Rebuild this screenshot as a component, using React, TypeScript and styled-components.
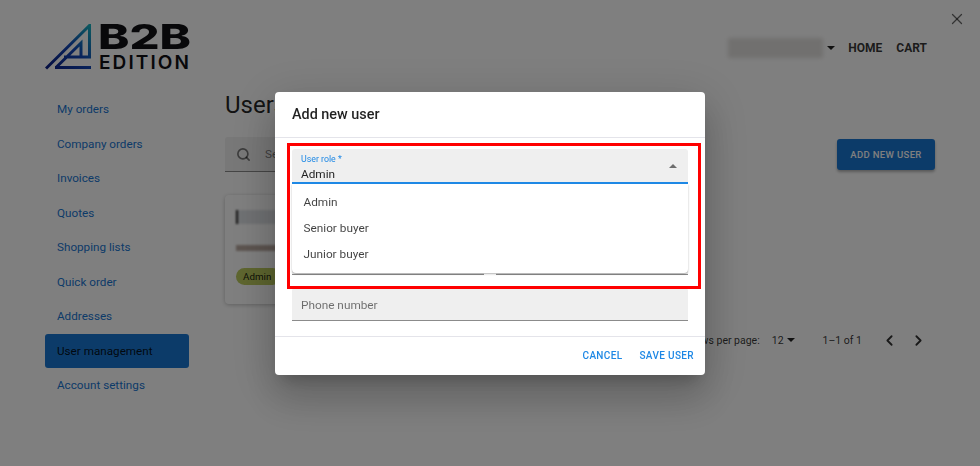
import styled, { createGlobalStyle } from 'styled-components';
import { ChevronLeft, ChevronRight, Search, X } from 'lucide-react';

const GlobalStyle = createGlobalStyle`
  html, body {
    margin: 0;
    height: 100%;
    overflow: hidden;
    background: #fff;
    font-family: Roboto, "Liberation Sans", sans-serif;
  }
`;

const Page = styled.div`
  width: 980px;
  height: 466px;
  padding: 24px 53px 0 45px;
  box-sizing: border-box;
  color: rgba(0, 0, 0, 0.87);
`;

const Header = styled.header`
  height: 68px;
  display: flex;
  align-items: flex-start;
  justify-content: space-between;
`;

const Logo = styled.div`
  display: flex;
  align-items: flex-start;
  gap: 6px;
`;

const LogoText = styled.div`
  display: flex;
  flex-direction: column;
  width: 90px;
  color: #101014;
  font-family: Inter, "Liberation Sans", sans-serif;
`;

const LogoTop = styled.span`
  height: 28px;
  margin-left: -1px;
  font-size: 34px;
  line-height: 26px;
  font-weight: 800;
  white-space: nowrap;
  transform: scaleX(1.39);
  transform-origin: left center;
`;

const LogoBottom = styled.span`
  margin-top: 2px;
  font-size: 19px;
  line-height: 17px;
  font-weight: 600;
  letter-spacing: 2.1px;
  white-space: nowrap;
`;

const Nav = styled.nav`
  display: flex;
  align-items: center;
  height: 20px;
  margin-top: 14px;
`;

const BlurredName = styled.div`
  width: 95px;
  height: 20px;
  margin-right: 4px;
  background: #e2e0de;
  filter: blur(2px);
`;

const Caret = styled.span<{ $up?: boolean; $color?: string }>`
  display: inline-block;
  width: 0;
  height: 0;
  border-left: 4px solid transparent;
  border-right: 4px solid transparent;
  ${(p) => (p.$up ? 'border-bottom' : 'border-top')}: 4px solid ${(p) => p.$color || 'rgba(0, 0, 0, 0.87)'};
`;

const NavLink = styled.a`
  margin: -1px 0 0 14px;
  font-size: 12px;
  font-weight: 700;
  color: rgba(0, 0, 0, 0.8);
`;

const HomeLink = styled(NavLink)`
  margin-left: 13px;
`;

const CloseButton = styled.button`
  position: fixed;
  top: 10px;
  left: 948px;
  width: 18px;
  height: 18px;
  padding: 0;
  border: 0;
  background: none;
  color: rgba(0, 0, 0, 0.6);
  display: flex;
`;

const Columns = styled.div`
  display: flex;
`;

const Sidebar = styled.aside`
  width: 144px;
  display: flex;
  flex-direction: column;
  margin-right: 36px;
`;

const SideItem = styled.a<{ $active?: boolean }>`
  height: 34.5px;
  display: flex;
  align-items: center;
  padding-left: 12px;
  font-size: 11.7px;
  border-radius: 3px;
  color: ${(p) => (p.$active ? 'rgba(0, 0, 0, 0.87)' : '#1976d2')};
  background: ${(p) => (p.$active ? '#1976d2' : 'transparent')};
`;

const Main = styled.main`
  flex: 1;
  min-width: 0;
`;

const Title = styled.h1`
  margin: 0;
  height: 45px;
  font-size: 24px;
  line-height: 26px;
  font-weight: 400;
`;

const Toolbar = styled.div`
  display: flex;
  align-items: flex-start;
  justify-content: space-between;
  margin-right: -8px;
`;

const SearchBox = styled.div`
  width: 470px;
  height: 35px;
  box-sizing: border-box;
  display: flex;
  align-items: center;
  gap: 14px;
  padding-left: 11px;
  background: #f0f0f0;
  border-bottom: 1px solid rgba(0, 0, 0, 0.42);
  border-radius: 3px 3px 0 0;
  font-size: 11.7px;
  color: rgba(0, 0, 0, 0.5);
`;

const AddButton = styled.button`
  width: 98px;
  height: 31px;
  margin-top: 2px;
  padding: 0;
  border: 0;
  border-radius: 3px;
  background: #1976d2;
  color: #fff;
  font: 500 9.5px Roboto, sans-serif;
  letter-spacing: 0.35px;
  box-shadow: 0 2px 3px rgba(0, 0, 0, 0.3);
`;

const UserCard = styled.section`
  width: 280px;
  height: 109px;
  margin-top: 23px;
  box-sizing: border-box;
  padding: 15px 11px;
  border-radius: 4px;
  background: #fff;
  box-shadow: 0 1px 4px rgba(0, 0, 0, 0.25);
`;

const CardName = styled.div`
  height: 14px;
  width: 50px;
  background: #dfe2e6;
  border-left: 2px solid #222;
  filter: blur(1px);
`;

const CardEmail = styled.div`
  width: 60px;
  height: 6px;
  margin-top: 21px;
  background: #b9a9a0;
  filter: blur(1px);
`;

const Chip = styled.div`
  width: fit-content;
  margin-top: 17px;
  padding: 0 10px 0 7px;
  height: 17px;
  border-radius: 9px;
  background: #bdcc5f;
  font-size: 9.8px;
  line-height: 17px;
`;

const Pager = styled.div`
  display: flex;
  align-items: center;
  justify-content: flex-end;
  height: 20px;
  margin-top: 26px;
  font-size: 10.5px;
  color: rgba(0, 0, 0, 0.8);
`;

const PagerSize = styled.span`
  display: flex;
  align-items: center;
  gap: 3px;
  margin: 0 28px 0 12px;
`;

const PagerNav = styled.span`
  display: flex;
  gap: 12px;
  margin-left: 19px;
`;

const Backdrop = styled.div`
  position: fixed;
  inset: 0;
  background: rgba(0, 0, 0, 0.5);
`;

const Dialog = styled.div`
  position: fixed;
  top: 92px;
  left: 275px;
  width: 430px;
  height: 283px;
  display: flex;
  flex-direction: column;
  border-radius: 4px;
  background: #fff;
  box-shadow: 0 11px 15px -7px rgba(0, 0, 0, 0.2), 0 24px 38px 3px rgba(0, 0, 0, 0.14), 0 9px 46px 8px rgba(0, 0, 0, 0.12);
`;

const DialogTitle = styled.h2`
  margin: 0;
  height: 46px;
  box-sizing: border-box;
  padding: 14px 17px 0;
  font-size: 14.4px;
  line-height: 18px;
  font-weight: 500;
  color: rgba(0, 0, 0, 0.87);
  border-bottom: 1px solid #e4e4ea;
`;

const DialogBody = styled.div`
  position: relative;
  flex: 1;
  display: flex;
  flex-direction: column;
  gap: 12px;
  padding: 11px 17px 0;
  border-bottom: 1px solid #e4e4ea;
`;

const Field = styled.div<{ $focused?: boolean }>`
  position: relative;
  height: 34px;
  box-sizing: border-box;
  padding: 0 9px;
  border-radius: 3px 3px 0 0;
  background: #efefef;
  border-bottom: ${(p) => (p.$focused ? '2px solid #1e88e5' : '1px solid rgba(0, 0, 0, 0.42)')};
`;

const RoleField = styled(Field)`
  height: 35px;
  margin-bottom: -1px;
  z-index: 1;
`;

const FieldRow = styled.div`
  display: flex;
  gap: 12px;
  & > * {
    flex: 1;
  }
`;

const PhoneField = styled(Field)`
  height: 33px;
  margin-top: 1px;
  padding-top: 1px;
  display: flex;
  align-items: center;
  font-size: 11.8px;
  color: rgba(0, 0, 0, 0.55);
`;

const RoleLabel = styled.div`
  padding-top: 4.5px;
  font-size: 8.8px;
  line-height: 11px;
  color: #1e88e5;
`;

const RoleValue = styled.div`
  margin-top: 2px;
  font-size: 11.8px;
  line-height: 15px;
  color: rgba(0, 0, 0, 0.87);
`;

const RoleCaret = styled.span`
  position: absolute;
  top: 15px;
  right: 11px;
  display: flex;
`;

const Menu = styled.ul`
  position: absolute;
  top: 46px;
  left: 17px;
  width: 396px;
  height: 89px;
  box-sizing: border-box;
  margin: 0;
  padding: 5px 0;
  list-style: none;
  border-radius: 0 0 4px 4px;
  background: #fff;
  box-shadow: 0 1px 2px rgba(0, 0, 0, 0.3);
`;

const MenuItem = styled.li`
  height: 26px;
  padding-left: 11.5px;
  font-size: 11.8px;
  line-height: 26px;
  color: rgba(0, 0, 0, 0.75);
`;

const Highlight = styled.div`
  position: absolute;
  top: 4.5px;
  left: 11.5px;
  width: 414px;
  height: 146px;
  box-sizing: border-box;
  border: 3px solid #ff0000;
  pointer-events: none;
  z-index: 2;
`;

const DialogActions = styled.div`
  height: 36px;
  display: flex;
  align-items: center;
  justify-content: flex-end;
  gap: 17px;
  padding: 0 11px 2px 0;
`;

const ActionButton = styled.a`
  font-size: 10px;
  font-weight: 500;
  letter-spacing: 0.35px;
  color: #1e88e5;
`;

const sideItems = ['My orders', 'Company orders', 'Invoices', 'Quotes', 'Shopping lists', 'Quick order', 'Addresses', 'User management', 'Account settings'];
const roles = ['Admin', 'Senior buyer', 'Junior buyer'];

const LogoMark = () => (
  <svg width="48" height="46" viewBox="0 0 48 46" fill="none">
    <defs>
      <linearGradient id="logoGrad" x1="0" y1="46" x2="46" y2="0" gradientUnits="userSpaceOnUse">
        <stop offset="0" stopColor="#0a1a80" />
        <stop offset="0.55" stopColor="#1248b8" />
        <stop offset="1" stopColor="#18b8c0" />
      </linearGradient>
    </defs>
    <path d="M1 44.5 L44.5 1.5 V33 H19 M10 43.5 H46 M11 43.5 L36 19 V33" stroke="url(#logoGrad)" strokeWidth="3" />
  </svg>
);

export default function App() {
  return (
    <>
      <GlobalStyle />
      <Page>
        <Header>
          <Logo>
            <LogoMark />
            <LogoText>
              <LogoTop>B2B</LogoTop>
              <LogoBottom>EDITION</LogoBottom>
            </LogoText>
          </Logo>
          <Nav>
            <BlurredName />
            <Caret />
            <HomeLink>HOME</HomeLink>
            <NavLink>CART</NavLink>
          </Nav>
        </Header>
        <Columns>
          <Sidebar>
            {sideItems.map((item) => (
              <SideItem key={item} $active={item === 'User management'}>{item}</SideItem>
            ))}
          </Sidebar>
          <Main>
            <Title>Users</Title>
            <Toolbar>
              <SearchBox><Search size={15} strokeWidth={2.6} />Search</SearchBox>
              <AddButton>ADD NEW USER</AddButton>
            </Toolbar>
            <UserCard>
              <CardName />
              <CardEmail />
              <Chip>Admin</Chip>
            </UserCard>
            <Pager>
              Rows per page:
              <PagerSize>12 <Caret /></PagerSize>
              1–1 of 1
              <PagerNav><ChevronLeft size={17} strokeWidth={2.6} /><ChevronRight size={17} strokeWidth={2.6} /></PagerNav>
            </Pager>
          </Main>
        </Columns>
      </Page>
      <Backdrop />
      <CloseButton><X size={18} strokeWidth={1.7} /></CloseButton>
      <Dialog>
        <DialogTitle>Add new user</DialogTitle>
        <DialogBody>
          <RoleField $focused>
            <RoleLabel>User role *</RoleLabel>
            <RoleValue>Admin</RoleValue>
            <RoleCaret><Caret $up $color="rgba(0, 0, 0, 0.54)" /></RoleCaret>
          </RoleField>
          <Field />
          <FieldRow><Field /><Field /></FieldRow>
          <PhoneField>Phone number</PhoneField>
          <Menu>
            {roles.map((role) => <MenuItem key={role}>{role}</MenuItem>)}
          </Menu>
          <Highlight />
        </DialogBody>
        <DialogActions>
          <ActionButton>CANCEL</ActionButton>
          <ActionButton>SAVE USER</ActionButton>
        </DialogActions>
      </Dialog>
    </>
  );
}
